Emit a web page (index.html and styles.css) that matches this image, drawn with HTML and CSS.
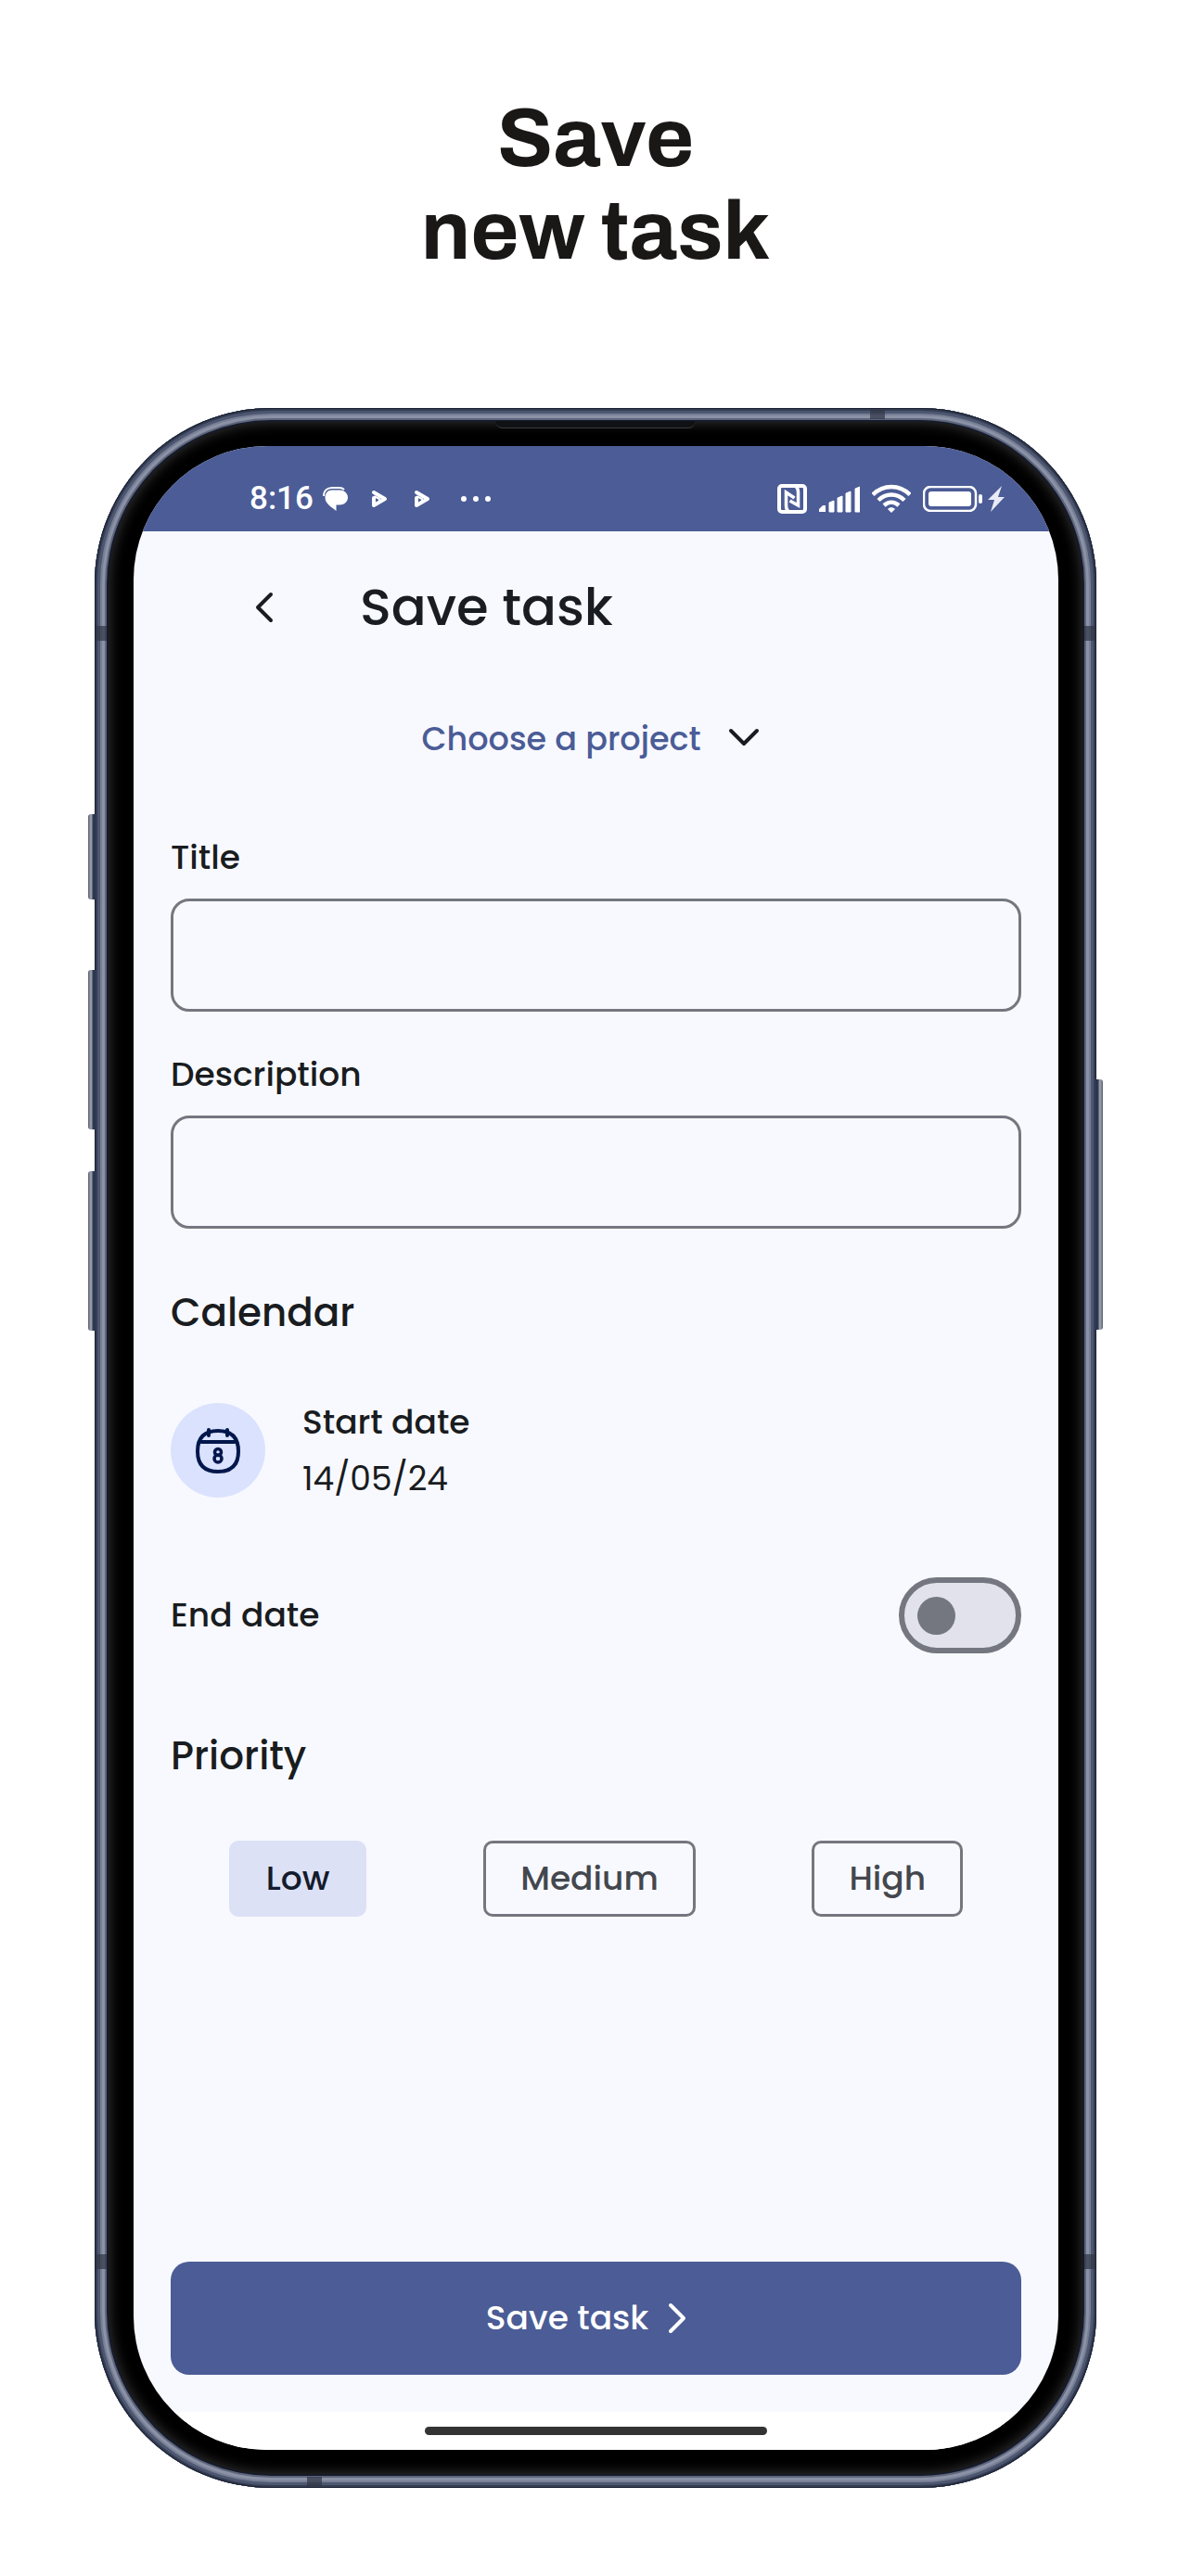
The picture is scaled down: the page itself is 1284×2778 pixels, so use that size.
FILE: index.html
```html
<!DOCTYPE html>
<html lang="en">
<head>
<meta charset="utf-8">
<meta name="viewport" content="width=device-width, initial-scale=1">
<title>Save new task</title>
<link rel="stylesheet" href="styles.css">
</head>
<body>
<h1 class="headline">Save<br>new task</h1>

<div class="phone">
  <span class="side-key side-key-action"></span>
  <span class="side-key side-key-up"></span>
  <span class="side-key side-key-down"></span>
  <span class="side-key side-key-power"></span>
  <span class="band band-left-top"></span>
  <span class="band band-left-bottom"></span>
  <span class="band band-right-top"></span>
  <span class="band band-right-bottom"></span>
  <span class="band band-top"></span>
  <span class="band band-bottom"></span>
  <span class="speaker"></span>

  <div class="screen">
    <div class="status-bar">
      <div class="status-left">
        <span class="clock">8:16</span>
        <svg class="icon-chat" width="28" height="26" viewBox="0 0 28 26" aria-hidden="true">
          <path d="M1 10C1 4 5 1 10 1h8c2 0 4 1 5 2" fill="none" stroke="#fff" stroke-width="2"/>
          <path d="M10 3.500h8c5 0 9 3.500 9 8s-4 8-9 8h-3.500V26C9 21.500 2.500 18 2.500 11.500c0-4.500 3-8 7.500-8z" fill="#fff"/>
        </svg>
        <svg width="18" height="20" viewBox="0 0 18 20" fill="none" stroke="#fff" stroke-width="4" stroke-linecap="round" stroke-linejoin="round" aria-hidden="true"><path d="M3 3 15 10 3 17V9"/><path d="M4 7.500 9 10v3" stroke-width="2"/></svg>
        <svg width="18" height="20" viewBox="0 0 18 20" fill="none" stroke="#fff" stroke-width="4" stroke-linecap="round" stroke-linejoin="round" aria-hidden="true"><path d="M3 3 15 10 3 17V9"/><path d="M4 7.500 9 10v3" stroke-width="2"/></svg>
        <svg class="icon-more" width="32" height="6" viewBox="0 0 32 6" fill="#fff" aria-hidden="true"><circle cx="3" cy="3" r="3"/><circle cx="16" cy="3" r="3"/><circle cx="29" cy="3" r="3"/></svg>
      </div>
      <div class="status-right">
        <svg width="32" height="32" viewBox="0 0 32 32" fill="none" stroke="#fff" stroke-width="4" aria-hidden="true">
          <rect x="2" y="2" width="28" height="28" rx="3"/>
          <path d="M12 29c-2-1-2.500-3-2.500-6V9l9 6" stroke-width="3.500"/><path d="M20 3c2 1 2.500 3 2.500 6v14l-9-5" stroke-width="3.500"/>
        </svg>
        <svg width="44" height="30" viewBox="0 0 44 30" fill="#fff" aria-hidden="true">
          <path d="M0 29v-3l4-4h3v7z"/><path d="M11 19l5-2v12h-5zM20 14l5-2v17h-5zM29 9l5-2v22h-5zM39 4l5-2v27h-5z" stroke="#fff" stroke-linejoin="round"/>
        </svg>
        <svg width="42" height="32" viewBox="0 0 42 32" fill="none" stroke="#fff" stroke-width="4.500" aria-hidden="true">
          <path d="M1 11.500C12 0 30 0 41 11.500"/><path d="M7 17.500c8-8 20-8 28 0"/><path d="M13 23c5-4.500 11-4.500 16 0"/><path d="M17 27c2.500-2.500 5.500-2.500 8 0l-4 4z" fill="#fff" stroke="none"/>
        </svg>
        <svg class="icon-battery" width="64" height="28" viewBox="0 0 64 28" aria-hidden="true">
          <rect x="1" y="1" width="56" height="26" rx="7" fill="none" stroke="#fff" stroke-width="2.500"/><rect x="6" y="6" width="46" height="16" rx="3" fill="#fff"/><rect x="60" y="9" width="4" height="10" rx="2" fill="#fff"/>
        </svg>
        <svg width="18" height="28" viewBox="0 0 18 28" aria-hidden="true"><path d="M15 0 0 15h7L3 28l15-16h-7z" fill="#e8eaf6"/></svg>
      </div>
    </div>

    <header class="top-bar">
      <button class="back" type="button" aria-label="Back">
        <svg width="62" height="62" viewBox="0 0 62 62" aria-hidden="true"><path d="M38 17 24 31l14 14" fill="none" stroke="currentColor" stroke-width="4" stroke-linecap="round" stroke-linejoin="round"/></svg>
      </button>
      <h2 class="top-title">Save task</h2>
    </header>

    <form class="form">
      <div class="project">
        <select class="project-select" aria-label="Project"><option>Choose a project</option></select>
        <svg width="60" height="60" viewBox="0 0 60 60" aria-hidden="true"><path d="M17 21l14 14 14-14" fill="none" stroke="currentColor" stroke-width="4" stroke-linecap="round" stroke-linejoin="round"/></svg>
      </div>

      <div class="fields">
        <div class="field">
          <label class="label" for="title">Title</label>
          <input class="text-box" id="title" type="text">
        </div>
        <div class="field">
          <label class="label" for="description">Description</label>
          <input class="text-box" id="description" type="text">
        </div>
      </div>

      <h3 class="section">Calendar</h3>
      <div class="date-row">
        <button class="date-button" type="button" aria-label="Pick start date">
          <svg width="62" height="62" viewBox="0 0 62 62" fill="none" stroke="currentColor" stroke-width="4" stroke-linecap="round" aria-hidden="true">
            <path d="M31 10c15 0 22 8 22 22s-7 22-22 22S9 46 9 32s7-22 22-22z"/>
            <path d="M13 22h36"/><path d="M21 9v6M41 9v6"/>
            <circle cx="31" cy="33" r="3.500" stroke-width="3.500"/><circle cx="31" cy="40" r="4" stroke-width="3.500"/>
          </svg>
        </button>
        <div class="date-text">
          <span class="label">Start date</span>
          <time class="date" datetime="2024-05-14">14/05/24</time>
        </div>
      </div>

      <div class="end-row">
        <label class="label" for="end">End date</label>
        <input class="switch" id="end" type="checkbox" role="switch">
      </div>

      <h3 class="section">Priority</h3>
      <div class="chips" role="radiogroup" aria-label="Priority">
        <label class="chip"><input class="chip-input" type="radio" name="priority" checked>Low</label>
        <label class="chip"><input class="chip-input" type="radio" name="priority">Medium</label>
        <label class="chip"><input class="chip-input" type="radio" name="priority">High</label>
      </div>

      <button class="save" type="button">Save task
        <svg width="62" height="62" viewBox="0 0 62 62" aria-hidden="true"><path d="M24 17l14 14-14 14" fill="none" stroke="currentColor" stroke-width="4" stroke-linecap="round" stroke-linejoin="round"/></svg>
      </button>
    </form>

    <div class="nav-area"><span class="home-bar"></span></div>
  </div>
</div>
</body>
</html>
```
FILE: styles.css
```css
* {
  box-sizing: border-box;
}

body {
  margin: 0;
  min-height: 100vh;
  display: flex;
  flex-direction: column;
  background: #fff;
  color: #191c20;
  font: 500 36px/40px Poppins, Inter, sans-serif;
}

button,
input,
select {
  margin: 0;
  padding: 0;
  border: 0;
  background: none;
  color: inherit;
  font: inherit;
}

svg {
  display: block;
  flex: none;
}

.headline {
  margin: 100px 0 140px;
  color: #1a1717;
  font: 700 89px/100px Archivo, "Liberation Sans", sans-serif;
  text-align: center;
}

/* Device frame: stacked inset rings make the metal edge and the bezel glow */
.phone {
  position: relative;
  flex: 1;
  display: flex;
  margin: 0 102px 95px;
  padding: 41px 41px 41px 42px;
  border-radius: 190px;
  background: #000;
  box-shadow:
    inset 0 0 0 1px #1b2130,
    inset 0 0 0 3px #343d54,
    inset 0 0 0 6px #4d5770,
    inset 0 0 0 8px #777f96,
    inset 0 0 0 11px #8c92a6,
    inset 0 0 0 13px #5d667d,
    inset 0 0 0 15px #161b2a,
    inset 0 0 14px 16px #333;
}

.screen {
  flex: 1;
  display: flex;
  flex-direction: column;
  overflow: hidden;
  border-radius: 144px;
  background: #f8f9ff;
}

.side-key {
  position: absolute;
  left: -7px;
  width: 8px;
  border-radius: 3px 0 0 3px;
  background: linear-gradient(90deg, #59606f, #a3a9b5 40%, #2b354d 70%);
}

.side-key-action { top: 438px; height: 92px; }
.side-key-up { top: 606px; height: 172px; }
.side-key-down { top: 823px; height: 172px; }

.side-key-power {
  top: 724px;
  right: -7px;
  left: auto;
  height: 270px;
  border-radius: 0 3px 3px 0;
  background: linear-gradient(270deg, #59606f, #a3a9b5 40%, #2b354d 70%);
}

.band {
  position: absolute;
  width: 12px;
  height: 16px;
  background: #2f3544;
  opacity: .7;
}

.band-left-top { top: 235px; left: 1px; }
.band-left-bottom { bottom: 236px; left: 1px; }
.band-right-top { top: 235px; right: 1px; }
.band-right-bottom { right: 1px; bottom: 236px; }
.band-top { top: 2px; right: 228px; width: 16px; height: 10px; }
.band-bottom { bottom: 2px; left: 229px; width: 16px; height: 10px; }

.speaker {
  position: absolute;
  top: 14px;
  left: 50%;
  width: 216px;
  height: 8px;
  margin-left: -108px;
  border-bottom: 1px solid #3a3a3c;
  border-radius: 0 0 8px 8px;
  background: #101114;
}

.status-bar {
  display: flex;
  justify-content: space-between;
  align-items: center;
  height: 92px;
  padding: 22px 58px 0 125px;
  background: #4b5c96;
  color: #fff;
}

.status-left,
.status-right {
  display: flex;
  align-items: center;
}

.status-left { gap: 28px; }
.status-right { gap: 13px; }

.clock {
  font: 500 35px/40px Roboto, sans-serif;
}

.icon-chat { margin: 0 -4px 0 -18px; }
.icon-more { margin-left: 5px; }
.icon-battery { margin-right: -7px; }

.top-bar {
  display: flex;
  align-items: center;
  height: 163px;
  padding: 0 110px;
}

.back { margin-right: 72px; }

.top-title {
  margin: 0;
  font-size: 56px;
  font-weight: 500;
  line-height: 64px;
}

.form {
  flex: 1;
  display: flex;
  flex-direction: column;
  padding: 0 40px 40px;
}

.project {
  display: flex;
  justify-content: center;
  align-items: center;
  gap: 14px;
  height: 122px;
}

.project-select {
  appearance: none;
  color: #4b5c96;
  font-size: 35px;
  line-height: 48px;
}

.fields {
  display: grid;
  gap: 48px;
  margin: 47px 0 67px;
}

.field {
  display: grid;
  gap: 24px;
}

.text-box {
  width: 100%;
  height: 122px;
  padding: 0 36px;
  border: 3px solid #74777f;
  border-radius: 20px;
}

.section {
  margin: 0;
  font-size: 42px;
  font-weight: 500;
  line-height: 48px;
}

.date-row {
  display: flex;
  align-items: center;
  gap: 40px;
  margin: 73px 0 86px;
}

.date-button {
  display: grid;
  place-items: center;
  width: 102px;
  height: 102px;
  border-radius: 50%;
  background: #dae2fe;
  color: #00174b;
}

.date-text {
  display: grid;
  gap: 21px;
}

.date { font-weight: 400; }

.end-row {
  display: flex;
  justify-content: space-between;
  align-items: center;
  margin-bottom: 87px;
}

.switch {
  appearance: none;
  display: flex;
  align-items: center;
  width: 132px;
  height: 82px;
  padding: 0 14px;
  border: 6px solid #74777f;
  border-radius: 41px;
  background: #e1e2ec;
}

.switch::before {
  content: "";
  width: 41px;
  height: 41px;
  border-radius: 50%;
  background: #74777f;
}

.switch:checked { justify-content: flex-end; }

.chips {
  display: flex;
  justify-content: space-around;
  margin: 67px 0 80px;
}

.chip {
  position: relative;
  padding: 18px 37px;
  border: 3px solid #74777f;
  border-radius: 10px;
  color: #44474e;
}

.chip:has(:checked) {
  border-color: #dde1f6;
  background: #dde1f6;
  color: #141b2c;
}

.chip-input {
  appearance: none;
  position: absolute;
  inset: 0;
}

.save {
  display: flex;
  justify-content: center;
  align-items: center;
  height: 122px;
  margin-top: auto;
  border-radius: 20px;
  background: #4b5c96;
  color: #fff;
}

.nav-area {
  display: flex;
  justify-content: center;
  height: 41px;
  padding-top: 16px;
  background: #fff;
}

.home-bar {
  width: 37%;
  height: 9px;
  border-radius: 5px;
  background: #333;
}
```
